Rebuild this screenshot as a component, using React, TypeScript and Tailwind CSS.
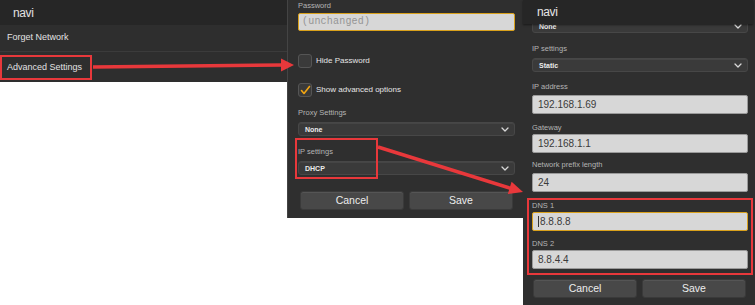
import React from 'react'

const RED = '#e8383b'

const Label = ({ children, className = '' }: { children: React.ReactNode; className?: string }) => (
  <div className={`text-[7.5px] leading-[9px] text-[#b4b4b4] ${className}`}>{children}</div>
)

const Chevron = () => (
  <svg width="8" height="5" viewBox="0 0 8 5" className="shrink-0">
    <path d="M1 1 L4 4 L7 1" fill="none" stroke="#d8d8d8" strokeWidth="1.3" strokeLinecap="round" strokeLinejoin="round" />
  </svg>
)

const Select = ({ value, className = '' }: { value: string; className?: string }) => (
  <div
    className={`flex h-[14px] items-center justify-between rounded-[3px] border border-[#474747] bg-[#3a3a3a] pl-[6px] pr-[5px] shadow-[inset_0_1px_0_#454545] ${className}`}
  >
    <span className="text-[7px] font-bold leading-none text-[#ececec]">{value}</span>
    <Chevron />
  </div>
)

const Input = ({
  value,
  focused = false,
  caret = false,
  className = '',
}: {
  value: string
  focused?: boolean
  caret?: boolean
  className?: string
}) => (
  <div
    className={`flex h-[19px] items-center rounded-[2px] border bg-[#d7d7d7] pl-[5px] ${
      focused ? 'border-[#d9a11c]' : 'border-[#9a9a9a]'
    } ${className}`}
  >
    {caret && <span className="mr-[1px] h-[11px] w-px bg-[#333]" />}
    <span className="text-[10px] leading-none text-[#3a3a3a]">{value}</span>
  </div>
)

const Button = ({ children }: { children: React.ReactNode }) => (
  <div className="flex h-[19px] w-[104px] items-center justify-center rounded-[3px] border border-[#3a3a3a] bg-[#484848] text-[10.5px] text-[#ededed] shadow-[inset_0_1px_0_#555]">
    {children}
  </div>
)

const Checkbox = ({ checked = false }: { checked?: boolean }) => (
  <div className="flex h-[14px] w-[14px] items-center justify-center rounded-[3px] border border-[#555] bg-[#3a3a3a]">
    {checked && (
      <svg width="11" height="10" viewBox="0 0 11 10">
        <path d="M1.5 5.5 L4 8.5 L9.5 1.5" fill="none" stroke="#f2a612" strokeWidth="1.6" strokeLinecap="round" strokeLinejoin="round" />
      </svg>
    )}
  </div>
)

const WifiMenu = () => (
  <div className="h-[82px] w-[287px] shrink-0 bg-[#2e2e2e] text-[#e2e2e2]">
    <div className="flex h-[25px] items-center bg-[#262626] pl-[13px] text-[12px] tracking-[-0.4px]">navi</div>
    <div className="flex h-[27px] items-center border-b border-[#3b3b3b] pl-[7px] text-[9px]">Forget Network</div>
    <div className="pt-[1px]">
      <span className="inline-flex h-[25px] items-center border-2 border-[#e8383b] pl-[5px] pr-[8px] text-[9px]">
        Advanced Settings
      </span>
    </div>
  </div>
)

const PasswordForm = () => (
  <div className="relative h-[218px] w-[236px] shrink-0 border-l border-[#444] bg-[#2f2f2f] pl-[10px] pr-[8px] pt-[1px]">
    <Label>Password</Label>
    <div className="mt-[3px] flex h-[18px] items-center rounded-[2px] border border-[#d9a11c] bg-[#d7d7d7] pl-[3px]">
      <span className="font-['Liberation_Mono'] text-[10px] leading-none tracking-[0.2px] text-[#959595]">(unchanged)</span>
    </div>
    <div className="mt-[23px] flex items-center gap-[4px]">
      <Checkbox />
      <span className="text-[8px] text-[#e6e6e6]">Hide Password</span>
    </div>
    <div className="mt-[15px] flex items-center gap-[4px]">
      <Checkbox checked />
      <span className="text-[8px] text-[#e6e6e6]">Show advanced options</span>
    </div>
    <Label className="mt-[11px]">Proxy Settings</Label>
    <Select value="None" className="mt-[5px]" />
    <Label className="mt-[11px]">IP settings</Label>
    <Select value="DHCP" className="mt-[5px]" />
    <div className="mt-[16px] flex gap-[5px] pl-[2px]">
      <Button>Cancel</Button>
      <Button>Save</Button>
    </div>
    <div className="absolute left-[7px] top-[138px] h-[41px] w-[83px] border-2 border-[#e8383b]" />
  </div>
)

const StaticForm = () => (
  <div className="h-[305px] w-[232px] shrink-0 bg-[#2f2f2f]">
    <div className="relative z-10 flex h-[24px] w-[230px] items-center bg-[#262626] pl-[14px] text-[12px] tracking-[-0.4px] text-[#e6e6e6] shadow-[0_1px_2px_rgba(0,0,0,0.5)]">
      navi
    </div>
    <div className="pl-[9px] pr-[7px]">
      <Select value="None" className="-mt-[5px]" />
      <Label className="mt-[11px]">IP settings</Label>
      <Select value="Static" className="mt-[5px]" />
      <Label className="mt-[10px]">IP address</Label>
      <Input value="192.168.1.69" className="mt-[4px] h-[18px]" />
      <Label className="mt-[9px]">Gateway</Label>
      <Input value="192.168.1.1" className="mt-[2px]" />
      <Label className="mt-[7px]">Network prefix length</Label>
      <Input value="24" className="mt-[4px] h-[18px]" />
      <div className="-mx-[5px] mt-[6px] border-2 border-[#e8383b] px-[3px] pb-[4px] pt-[1px]">
        <Label>DNS 1</Label>
        <Input value="8.8.8.8" focused caret className="mt-[2px]" />
        <Label className="mt-[8px]">DNS 2</Label>
        <Input value="8.8.4.4" className="mt-[2px]" />
      </div>
      <div className="mt-[4px] flex gap-[5px] pl-[1px]">
        <Button>Cancel</Button>
        <Button>Save</Button>
      </div>
    </div>
  </div>
)

const Arrows = () => (
  <svg className="pointer-events-none absolute inset-0" width="755" height="305" viewBox="0 0 755 305">
    <line x1="93" y1="67" x2="283" y2="65" stroke={RED} strokeWidth="3.5" />
    <polygon points="294,65 281,58.5 281,71.5" fill={RED} />
    <line x1="378" y1="147" x2="511" y2="188.5" stroke={RED} strokeWidth="3.5" />
    <polygon points="523,192 507.8,194 511.6,181.8" fill={RED} />
  </svg>
)

export default function App() {
  return (
    <div className="relative flex h-[305px] w-[755px] items-start overflow-hidden bg-white font-['Liberation_Sans',Arial,sans-serif]">
      <WifiMenu />
      <PasswordForm />
      <StaticForm />
      <Arrows />
    </div>
  )
}
